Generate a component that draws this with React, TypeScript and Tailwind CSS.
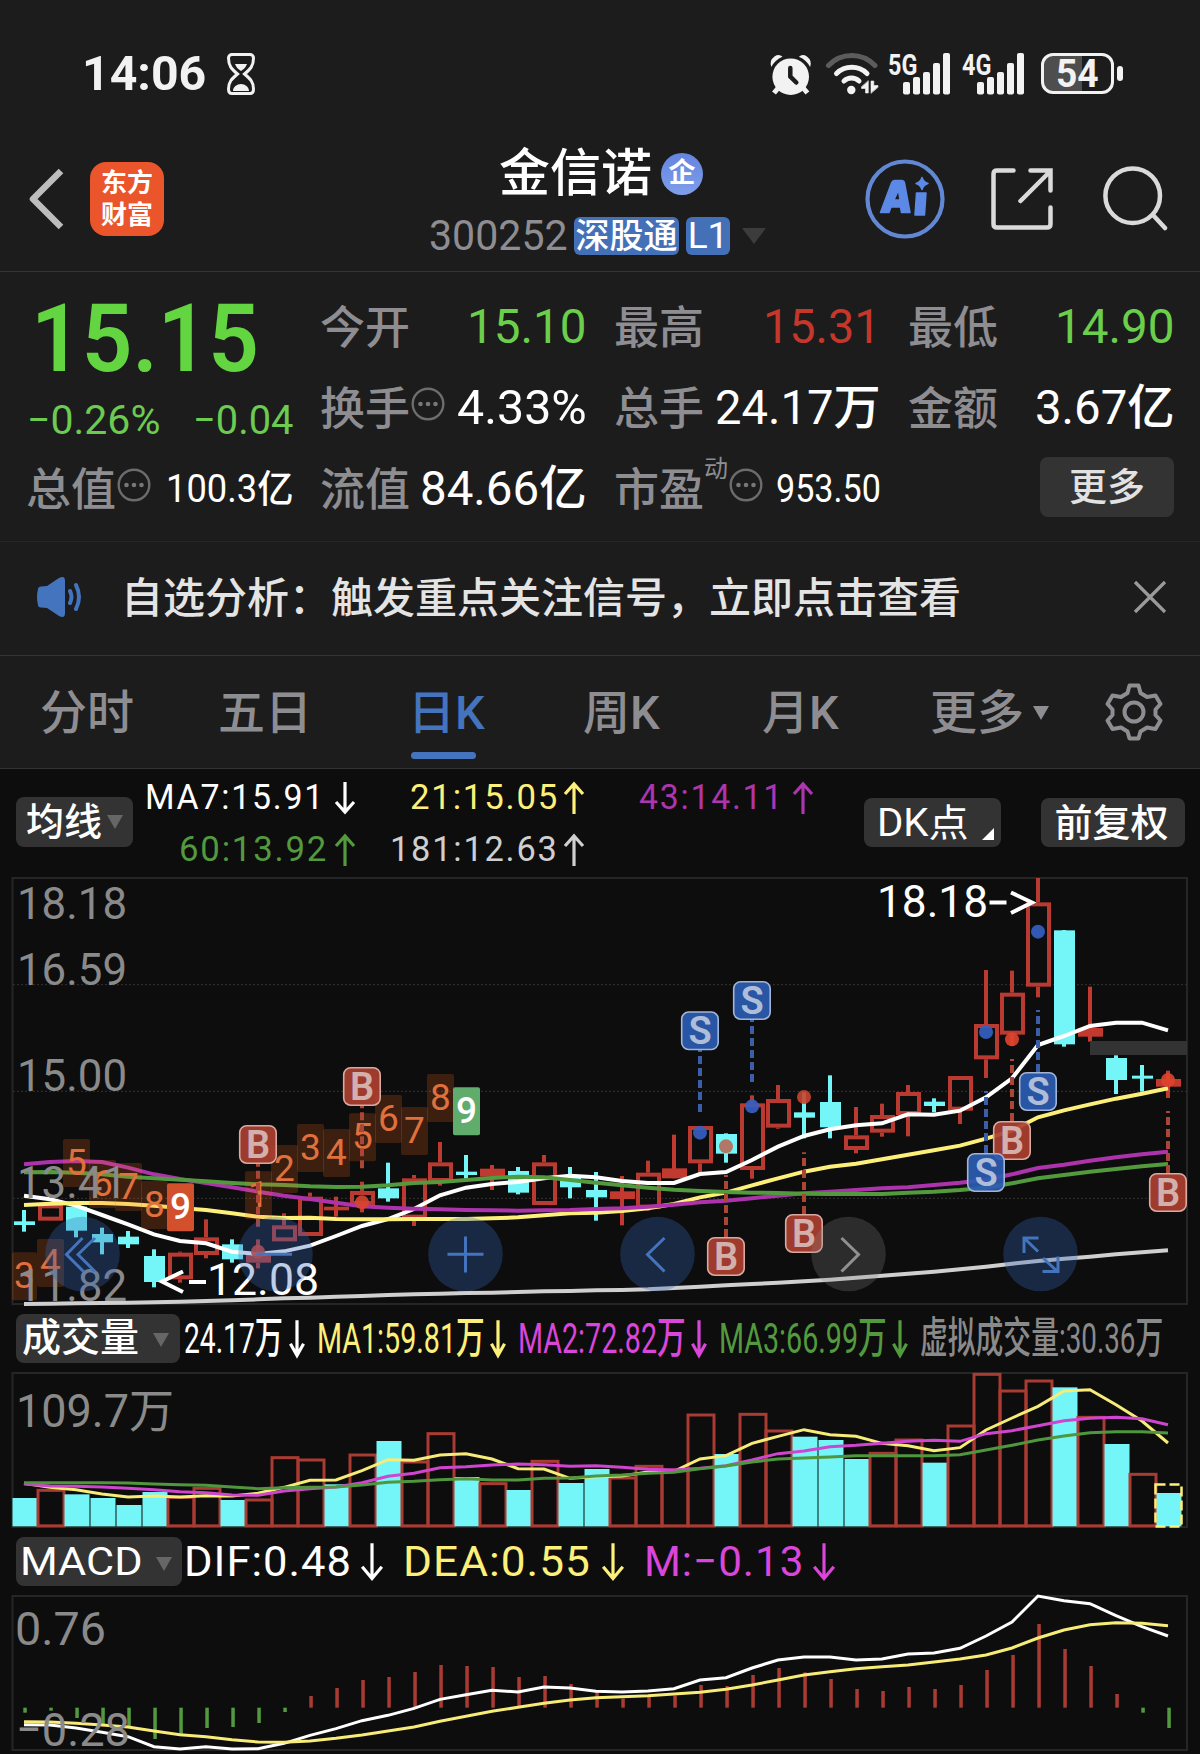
import { useLayoutEffect, useRef, useState } from "react";
import type { ReactNode } from "react";

const STEP = 26;
const FIRST_X = 24;
const FONT = "Roboto, 'Noto Sans CJK SC', sans-serif";
const cx = (i: number) => FIRST_X + i * STEP;

const RED = "#b93a30";
const CYAN = "#74f5f7";
const GREEN = "#539a3e";

// [kind, high, bodyTop, bodyBottom, low], offsets from the top of the pane in thirds of a pixel
// c = falling, r = rising (hollow), f = rising with a flat body
type Candle = ["c" | "r" | "f", number, number, number, number];
const candles: Candle[] = [
  ["c", 1050, 1084, 1095, 1115],
  ["r", 1033, 1033, 1082, 1082],
  ["c", 1036, 1040, 1112, 1132],
  ["c", 1103, 1122, 1147, 1183],
  ["c", 1113, 1130, 1153, 1164],
  ["c", 1168, 1188, 1266, 1282],
  ["r", 1175, 1178, 1258, 1268],
  ["r", 1078, 1132, 1185, 1195],
  ["c", 1138, 1153, 1198, 1208],
  ["r", 1138, 1185, 1208, 1225],
  ["r", 1060, 1096, 1144, 1144],
  ["r", 998, 1010, 1128, 1128],
  ["f", 1010, 1040, 1051, 1070],
  ["r", 965, 993, 1035, 1057],
  ["c", 908, 985, 1015, 1025],
  ["r", 945, 955, 1076, 1098],
  ["r", 846, 907, 966, 977],
  ["c", 885, 935, 945, 955],
  ["f", 915, 926, 950, 990],
  ["c", 921, 933, 998, 1003],
  ["r", 885, 907, 1035, 1035],
  ["c", 921, 950, 982, 1015],
  ["c", 936, 990, 1012, 1082],
  ["f", 948, 994, 1017, 1096],
  ["r", 902, 938, 1046, 1052],
  ["f", 824, 925, 955, 955],
  ["r", 798, 798, 910, 940],
  ["c", 820, 822, 881, 908],
  ["r", 706, 730, 930, 956],
  ["r", 675, 717, 803, 806],
  ["c", 697, 757, 773, 835],
  ["c", 646, 726, 802, 835],
  ["r", 741, 826, 870, 880],
  ["r", 731, 765, 818, 830],
  ["r", 675, 696, 765, 829],
  ["c", 715, 725, 738, 757],
  ["r", 648, 648, 752, 792],
  ["r", 330, 492, 598, 654],
  ["r", 332, 398, 524, 558],
  ["r", 54, 127, 380, 412],
  ["c", 210, 211, 553, 560],
  ["f", 380, 504, 530, 545],
  ["c", 586, 594, 660, 702],
  ["c", 615, 647, 656, 695],
  ["f", 632, 657, 680, 714],
];

const ma7 = [1007, 1018, 1037, 1065, 1093, 1123, 1143, 1150, 1175, 1182, 1174, 1157, 1128, 1098, 1077, 1047, 1006, 983, 972, 966, 955, 947, 952, 963, 969, 969, 942, 936, 900, 860, 828, 808, 796, 790, 763, 764, 752, 712, 655, 555, 528, 498, 488, 488, 511];
const ma21 = [1035, 1031, 1029, 1029, 1032, 1037, 1044, 1050, 1060, 1070, 1074, 1073, 1077, 1078, 1078, 1077, 1077, 1077, 1075, 1072, 1066, 1060, 1058, 1053, 1045, 1032, 1012, 998, 976, 955, 935, 920, 911, 898, 884, 871, 857, 836, 812, 772, 751, 733, 716, 701, 685];
const ma43 = [913, 906, 903, 906, 923, 943, 957, 969, 982, 995, 1007, 1017, 1028, 1039, 1043, 1046, 1048, 1050, 1051, 1052, 1051, 1050, 1047, 1045, 1040, 1034, 1027, 1022, 1015, 1007, 1000, 995, 990, 985, 982, 975, 968, 959, 943, 924, 914, 902, 892, 883, 875];
const ma60 = [937, 936, 938, 943, 950, 955, 959, 964, 969, 973, 975, 979, 981, 980, 976, 969, 966, 960, 954, 950, 952, 960, 968, 976, 983, 989, 993, 996, 998, 999, 1001, 1002, 1002, 1002, 998, 995, 990, 983, 970, 955, 945, 935, 927, 919, 912];
const ma181 = [1332, 1331, 1330, 1329, 1328, 1327, 1325, 1323, 1321, 1318, 1315, 1313, 1310, 1308, 1305, 1303, 1301, 1299, 1298, 1296, 1294, 1293, 1291, 1290, 1288, 1284, 1280, 1276, 1272, 1268, 1264, 1259, 1253, 1247, 1241, 1235, 1228, 1220, 1211, 1203, 1196, 1190, 1183, 1177, 1171];

const volumes: [string, number][] = [
  ["c", 594], ["r", 568], ["c", 583], ["c", 594], ["c", 615], ["c", 576], ["r", 589], ["r", 562], ["c", 600],
  ["r", 597], ["r", 470], ["r", 477], ["c", 553], ["r", 462], ["c", 423], ["r", 483], ["r", 398], ["c", 531],
  ["r", 548], ["c", 570], ["r", 481], ["c", 549], ["c", 507], ["r", 531], ["r", 496], ["r", 507], ["r", 342],
  ["c", 462], ["r", 340], ["r", 390], ["c", 410], ["c", 420], ["c", 477], ["r", 457], ["r", 417], ["c", 488],
  ["r", 375], ["r", 220], ["r", 270], ["r", 240], ["c", 262], ["r", 349], ["c", 432], ["r", 520], ["c", 579],
];
const vol1 = [550, 562, 569, 582, 591, 588, 591, 587, 588, 580, 562, 541, 540, 512, 479, 481, 465, 461, 477, 506, 507, 535, 530, 528, 516, 514, 477, 467, 430, 409, 389, 404, 409, 430, 437, 452, 443, 390, 354, 319, 273, 269, 314, 363, 429];
const vol2 = [552, 558, 559, 561, 565, 569, 575, 578, 585, 586, 573, 566, 561, 548, 529, 520, 503, 500, 495, 492, 494, 499, 497, 502, 508, 510, 505, 497, 480, 461, 453, 440, 436, 430, 424, 421, 424, 401, 392, 377, 362, 355, 352, 356, 374];
const vol3 = [548, 548, 548, 548, 549, 552, 554, 556, 561, 566, 563, 562, 561, 555, 547, 544, 539, 536, 540, 540, 535, 534, 528, 525, 520, 517, 506, 498, 486, 477, 474, 471, 467, 467, 467, 467, 464, 450, 436, 420, 408, 398, 395, 395, 399];

const macdBars = [1238, 1232, 1254, 1272, 1280, 1317, 1305, 1284, 1281, 1269, 1236, 1188, 1164, 1140, 1131, 1116, 1095, 1098, 1101, 1131, 1128, 1152, 1172, 1196, 1190, 1187, 1155, 1158, 1125, 1104, 1117, 1137, 1167, 1173, 1161, 1167, 1155, 1110, 1065, 972, 1047, 1098, 1182, 1238, 1284];
const dif = [1274, 1275, 1284, 1297, 1310, 1340, 1347, 1340, 1347, 1346, 1330, 1306, 1286, 1262, 1246, 1225, 1198, 1184, 1171, 1176, 1161, 1164, 1174, 1176, 1173, 1166, 1140, 1133, 1104, 1080, 1071, 1071, 1080, 1077, 1062, 1059, 1045, 1008, 966, 888, 902, 911, 947, 980, 1008];
const dea = [1265, 1266, 1270, 1275, 1281, 1293, 1304, 1310, 1319, 1326, 1327, 1323, 1315, 1305, 1293, 1281, 1264, 1249, 1234, 1222, 1210, 1200, 1193, 1190, 1187, 1182, 1177, 1168, 1155, 1140, 1125, 1115, 1106, 1100, 1095, 1086, 1077, 1065, 1044, 1014, 990, 974, 968, 970, 977];

// sequence counters: [candle index, digit, top]
const counters: [number, string, number][] = [
  [0, "3", 1177], [1, "4", 1137], [2, "5", 837], [3, "6", 900], [4, "7", 909], [5, "8", 963], [6, "9", 970],
  [9, "1", 934], [10, "2", 855], [11, "3", 792], [12, "4", 807], [13, "5", 760], [14, "6", 705], [15, "7", 741],
  [16, "8", 642], [17, "9", 682],
];

// buy / sell marks: [candle index, side, badge top, dash from, dash to, dot centre, dot colour]
const marks: [number, "B" | "S", number, number, number, number, string][] = [
  [9, "B", 795, 911, 1100, 1175, "#d8452f"],
  [13, "B", 621, 738, 925, 1027, "#d8452f"],
  [26, "S", 454, 570, 756, 818, "#3560c4"],
  [28, "S", 363, 479, 666, 739, "#3560c4"],
  [27, "B", 1131, 945, 1131, 859, "#b86a58"],
  [30, "B", 1062, 877, 1062, 711, "#c8452f"],
  [39, "S", 636, 450, 636, 215, "#3560c4"],
  [38, "B", 783, 597, 783, 538, "#e0442e"],
  [37, "S", 879, 693, 879, 516, "#3560c4"],
  [44, "B", 939, 753, 939, 660, "#e0442e"],
];

function points(values: number[], base: number) {
  return values.map((v, i) => `${cx(i)},${base + v / 3}`).join(" ");
}

function Line({ values, base, color, width = 4 }: { values: number[]; base: number; color: string; width?: number }) {
  return <polyline points={points(values, base)} fill="none" stroke={color} strokeWidth={width} />;
}

/** Squeezes or stretches one line of text to a given width. */
function Fit({ w, className = "", children }: { w: number; className?: string; children: ReactNode }) {
  const ref = useRef<HTMLSpanElement>(null);
  const [scale, setScale] = useState(1);
  useLayoutEffect(() => {
    if (ref.current) setScale(w / ref.current.offsetWidth);
  }, [w]);
  return (
    <span className={`block shrink-0 whitespace-nowrap text-left ${className}`} style={{ width: w }}>
      <span ref={ref} className="inline-block origin-left" style={{ transform: `scaleX(${scale})` }}>
        {children}
      </span>
    </span>
  );
}

function Arrow({ up = false, w = 22, h = 34 }: { up?: boolean; w?: number; h?: number }) {
  return (
    <svg width={w} height={h} viewBox="0 0 22 34" preserveAspectRatio="none" className="shrink-0" fill="none" stroke="currentColor" strokeWidth="3.200">
      {up ? (
        <path vectorEffect="non-scaling-stroke" d="M11 33V3M2 13l9-10 9 10" />
      ) : (
        <path vectorEffect="non-scaling-stroke" d="M11 1v30M2 21l9 10 9-10" />
      )}
    </svg>
  );
}

function Caret({ className = "" }: { className?: string }) {
  return (
    <svg width="16" height="14" viewBox="0 0 16 14" className={`shrink-0 ${className}`} fill="currentColor">
      <path d="M0 0h16L8 14z" />
    </svg>
  );
}

function Dots({ className = "" }: { className?: string }) {
  return (
    <svg width="34" height="34" viewBox="0 0 34 34" className={`shrink-0 ${className}`} fill="none" stroke="#6c6c6e" strokeWidth="2.4">
      <circle cx="17" cy="17" r="15.3" />
      <g fill="#77777a" stroke="none">
        <circle cx="9.5" cy="17" r="2.3" />
        <circle cx="17" cy="17" r="2.3" />
        <circle cx="24.5" cy="17" r="2.3" />
      </g>
    </svg>
  );
}

function Signal({ label }: { label: string }) {
  return (
    <div className="flex h-[42px] w-[62px]">
      <Fit w={29} className="text-[29px] font-bold leading-[24px]">{label}</Fit>
      <svg width="47" height="42" viewBox="0 0 47 42" className="-ml-[14px] shrink-0" fill="#f2f2f2">
        <rect x="0" y="29" width="7" height="12.5" rx="2" />
        <rect x="10" y="24" width="7" height="17.5" rx="2" />
        <rect x="20" y="19" width="7" height="22.5" rx="2" />
        <rect x="30" y="10" width="7" height="31.5" rx="2" />
        <rect x="40" y="0" width="7" height="41.5" rx="2" />
      </svg>
    </div>
  );
}

function StatusBar() {
  return (
    <div className="flex h-[130px] items-start pl-[82px] pt-[52px] text-[#f2f2f2]">
      <Fit w={124} className="text-[49px] font-bold leading-[44px]">14:06</Fit>
      <svg width="28" height="44" viewBox="0 0 28 44" className="ml-[21px]" fill="none" stroke="currentColor" strokeWidth="3">
        <path d="M5 2.5h18c2 0 3.500 1.500 3.500 3.500 0 8-3 11-9 16 6 5 9 8 9 15 0 3-1.500 4.500-3.500 4.500H5c-2 0-3.500-1.500-3.500-4.500 0-7 3-10 9-15-6-5-9-8-9-16 0-2 1.500-3.500 3.500-3.500z" />
        <path d="M8 12h12c-1 3-3 5-6 7-3-2-5-4-6-7zM6 39c0-4 4-7 8-7s8 3 8 7z" fill="currentColor" stroke="none" />
      </svg>
      <svg width="44" height="44" viewBox="0 0 44 44" className="ml-[514px]" fill="#f2f2f2">
        <path d="M2.300 15Q0 8.500 5.500 4.500 10 1.500 13.500 4.800 6 8 2.300 15zM41.100 15Q43.400 8.500 37.900 4.500 33.400 1.500 29.900 4.800 37.400 8 41.100 15z" />
        <path d="M10 35l-5 6M33.400 35l5 6" fill="none" stroke="#f2f2f2" strokeWidth="5" />
        <circle cx="21.700" cy="24.700" r="18.300" />
        <path d="M21.300 16v8.500l6 6" fill="none" stroke="#1c1c1c" strokeWidth="4.500" strokeLinecap="round" />
      </svg>
      <svg width="54" height="44" viewBox="0 0 54 44" className="ml-[12px]" fill="none" stroke="#f2f2f2" strokeWidth="5" strokeLinecap="round">
        <path d="M3.500 13.500a32 32 0 0 1 46.500 0" stroke="#5c5c5c" />
        <path d="M11.500 21.500a21.900 21.900 0 0 1 30.500 0" />
        <path d="M19 29a11 11 0 0 1 15 0" />
        <circle cx="26.300" cy="38" r="4.200" fill="#f2f2f2" stroke="none" />
        <path d="M43.300 29v12h-2.800v-4.500h-4v-1.500zM46 41V29h2.800v4.500h4.200v1.500z" fill="#f2f2f2" stroke="#f2f2f2" strokeWidth="0.600" />
      </svg>
      <div className="ml-[9px] mt-px"><Signal label="5G" /></div>
      <div className="ml-[12px] mt-px"><Signal label="4G" /></div>
      <div className="ml-[17px] mt-px flex items-center">
        <div className="relative flex h-[41px] w-[73px] items-center justify-center rounded-[12px] border-[3.500px] border-[#f2f2f2] bg-linear-to-r from-[#4e4e4e] from-57% to-[#1c1c1c] to-57%">
          <Fit w={43} className="text-[38px] font-bold leading-[38px]">54</Fit>
        </div>
        <div className="ml-[3px] h-[15px] w-[6px] rounded-[3px] bg-[#f2f2f2]" />
      </div>
    </div>
  );
}

function Header() {
  return (
    <header className="flex h-[142px] items-start border-b border-[#333] text-white">
      <svg width="40" height="64" viewBox="0 0 40 64" className="ml-[27px] mt-[37px]" fill="none" stroke="#bdbdbd" strokeWidth="6.500" strokeLinejoin="round">
        <path d="M34 4L6 32l28 28" />
      </svg>
      <div className="ml-[23px] mt-8 flex h-[74px] w-[74px] flex-col items-center justify-center rounded-2xl bg-[#ea552b] text-[26px] font-bold leading-8">
        <span>东方</span>
        <span>财富</span>
      </div>
      <div className="ml-[264px] mt-[13px] flex w-[342px] flex-col">
        <div className="ml-[71px] flex items-center">
          <span className="text-[51px] font-medium leading-[62px]">金信诺</span>
          <span className="ml-[9px] flex size-[42px] items-center justify-center rounded-full bg-linear-to-b from-[#6484e0] to-[#7f9fea] pb-px text-[27px] font-bold leading-[27px]">
            企
          </span>
        </div>
        <div className="mt-[11px] flex items-center">
          <Fit w={139} className="ml-px text-[42px] leading-[40px] text-[#8e8d92]">300252</Fit>
          <span className="ml-[6px] flex h-[38px] w-[105px] items-center justify-center rounded-md bg-[#4470b8] text-[34px] font-medium leading-[34px]">
            深股通
          </span>
          <span className="ml-[7px] flex h-[38px] w-[44px] items-center justify-center rounded-md bg-[#4470b8] text-[37px] leading-[38px]">
            L1
          </span>
          <svg width="24" height="16" viewBox="0 0 24 16" className="ml-[12px]" fill="#3c3c3c">
            <path d="M0 0h24L12 16z" />
          </svg>
        </div>
      </div>
      <svg width="80" height="80" viewBox="0 0 80 80" className="ml-[95px] mt-[29px]">
        <circle cx="40" cy="40" r="37.500" fill="none" stroke="#6288d4" strokeWidth="4.200" />
        <path d="M15.500 53.500l11-29.500q1-2.500 3.500-2.500h6.500q2.500 0 3 2.500l5.500 29.500h-8.500l-1-5.500h-9.500l-2 5.500zM29 41h6l-1.500-10zM51.500 34h9.500L59.500 56h-9.500zM57 18.500q1.500 4.500 6 6-4.500 1.500-6 6-1.500-4.500-6-6 4.500-1.500 6-6z" fill="#5c89e6" stroke="#5c89e6" strokeWidth="1.500" strokeLinejoin="round" />
      </svg>
      <svg width="62" height="64" viewBox="0 0 62 64" className="ml-[46px] mt-[37px]" fill="none" stroke="#dadada" strokeWidth="4.500" strokeLinecap="round">
        <path d="M22.500 3.500H6Q2.500 3.500 2.500 7V57q0 3.500 3.500 3.500H56q3.500 0 3.500-3.500V40.500" />
        <path d="M39.500 3.500h20v20M59 4.500L29.500 34" />
      </svg>
      <svg width="66" height="66" viewBox="0 0 66 66" className="ml-[49px] mt-[36px]" fill="none" stroke="#dadada" strokeWidth="4.500" strokeLinecap="round">
        <circle cx="30.700" cy="29.700" r="27.300" />
        <path d="M51 49l12 13" />
      </svg>
    </header>
  );
}

function Item({ label, value, w, tone, small, dots, sup }: { label: string; value: string; w: number; tone: string; small?: boolean; dots?: boolean; sup?: string }) {
  return (
    <div className="flex h-[81px] items-center">
      <span className="-ml-px mt-[7px] text-[45px] font-[450] leading-[50px] text-[#8e8d92]">{label}</span>
      {sup && <span className="-mt-[38px] text-2xl leading-6 text-[#8e8d92]">{sup}</span>}
      {dots && <Dots className="mb-[6px] ml-px" />}
      <Fit w={w} className={`ml-auto mt-[3px] ${small ? "text-[38px]" : "text-[48px]"} leading-[50px] ${tone}`}>{value}</Fit>
    </div>
  );
}

function Quote() {
  return (
    <section className="flex h-[270px] gap-7 border-b border-[#262626] pl-[27px] pt-[13px]">
      <div className="flex w-[266px] flex-col">
        <div className="flex h-[162px] flex-col text-[#63d541]">
          <Fit w={228} className="ml-[4px] mt-[6px] text-[95px] font-semibold leading-[96px]">15.15</Fit>
          <div className="mt-[8px] flex justify-between text-[41px] font-[450] leading-[50px] text-[#6ccb50]">
            <Fit w={133}>−0.26%</Fit>
            <Fit w={100}>−0.04</Fit>
          </div>
        </div>
        <Item label="总值" value="100.3亿" w={127} tone="text-white font-[450]" small dots />
      </div>
      <div className="w-[266px]">
        <Item label="今开" value="15.10" w={120} tone="text-[#6bcf4c] font-[450]" />
        <Item label="换手" value="4.33%" w={130} tone="text-white font-[450]" dots />
        <Item label="流值" value="84.66亿" w={167} tone="text-white font-[450]" />
      </div>
      <div className="w-[266px]">
        <Item label="最高" value="15.31" w={118} tone="text-[#c5372b] font-[450]" />
        <Item label="总手" value="24.17万" w={166} tone="text-white font-[450]" />
        <Item label="市盈" value="953.50" w={105} tone="text-white font-[450]" small dots sup="动" />
      </div>
      <div className="w-[266px]">
        <Item label="最低" value="14.90" w={120} tone="text-[#6bcf4c] font-[450]" />
        <Item label="金额" value="3.67亿" w={140} tone="text-white font-[450]" />
        <button type="button" className="ml-auto mr-px mt-[10px] flex h-[60px] w-[134px] items-center justify-center rounded-lg bg-[#333] text-[38px] font-medium leading-[50px] text-[#e2e2e2]">
          更多
        </button>
      </div>
    </section>
  );
}

function Notice() {
  return (
    <section className="flex h-[114px] items-center border-b border-[#333] pl-[36px]">
      <svg width="48" height="40" viewBox="0 0 48 40" className="-mt-[3px]" fill="none" stroke="#4474bd" strokeWidth="4" strokeLinecap="round">
        <path d="M2 12q0-2 3-2.500L11 9 23 1q6-3 6 3v32q0 6-6 3L11 31l-6-.5q-3-.5-3-2.500-2-8 0-16z" fill="#4474bd" stroke="none" />
        <path d="M34 14q3 6 0 12M40 8q6 12 0 24" />
      </svg>
      <span className="ml-[37px] text-[42px] font-medium leading-[50px] text-[#e4e4e4]">自选分析：触发重点关注信号，立即点击查看</span>
      <svg width="34" height="34" viewBox="0 0 34 34" className="-mt-[3px] ml-[172px]" fill="none" stroke="#9a9a9a" strokeWidth="3.200">
        <path d="M2 2l30 30M32 2L2 32" />
      </svg>
    </section>
  );
}

const tabs = [
  { label: "分时", lead: "ml-[40px] w-[95px]" },
  { label: "五日", lead: "ml-[83px] w-[95px]" },
  { label: "日K", lead: "ml-[95px] w-[78px]", active: true },
  { label: "周K", lead: "ml-[97px] w-[78px]" },
  { label: "月K", lead: "ml-[101px] w-[78px]" },
];

function Tabs() {
  return (
    <nav className="flex h-[113px] items-start border-b border-[#333] text-[47px] leading-[56px] text-[#8e8d92]">
      {tabs.map((t) => (
        <div key={t.label} className={`flex h-full shrink-0 flex-col whitespace-nowrap pt-[29px] ${t.lead} ${t.active ? "text-[#4474bd]" : ""}`}>
          <span className="font-medium">{t.label}</span>
          {t.active && <span className="ml-[3px] mt-[11px] h-[7px] w-[65px] rounded-full bg-[#4474bd]" />}
        </div>
      ))}
      <div className="ml-[90px] flex shrink-0 items-center pt-[29px] font-medium">
        更多
        <Caret className="ml-[9px]" />
      </div>
      <svg width="58" height="58" viewBox="0 0 58 58" className="ml-[56px] mt-[27px]" fill="none" stroke="#8e8d92" strokeWidth="4" strokeLinejoin="round">
        <path d="M24.500 2.500h9l2 7.500 6.500 4 8.500-1.500 5 8.500-5 5.500v5.500l5 5.500-5 8.500-8.500-1.500-6.500 4-2 7h-9l-2-7-6.500-4L7.500 46l-5-8.500 5-5.500v-5.500l-5-5.500 5-8.500L16 14l6.500-4z" />
        <circle cx="29" cy="29" r="9.500" />
      </svg>
    </nav>
  );
}

function MaBar() {
  return (
    <div className="flex h-[103px] pl-[16px]">
      <button type="button" className="mt-[28px] flex h-[50px] w-[117px] items-center rounded-lg bg-[#333] pl-[10px] text-[38px] font-medium leading-[46px] text-white">
        均线
        <Caret className="ml-[5px] text-[#666]" />
      </button>
      <div className="ml-[12px] flex w-[670px] flex-col pt-[3px] text-[35px] leading-[52px] tracking-[1.800px]">
        <div className="flex h-[52px] items-center">
          <Fit w={180} className="text-white">MA7:15.91</Fit>
          <span className="ml-[9px] text-white"><Arrow /></span>
          <Fit w={149} className="ml-[54px] text-[#fdf07a]">21:15.05</Fit>
          <span className="ml-[4px] text-[#fdf07a]"><Arrow up /></span>
          <Fit w={145} className="ml-[54px] text-[#ad35ad]">43:14.11</Fit>
          <span className="ml-[8px] text-[#ad35ad]"><Arrow up /></span>
        </div>
        <div className="flex h-[52px] items-center pl-[34px]">
          <Fit w={149} className="text-[#539a3e]">60:13.92</Fit>
          <span className="ml-[6px] text-[#539a3e]"><Arrow up /></span>
          <Fit w={169} className="ml-[34px] text-[#cfcfcf]">181:12.63</Fit>
          <span className="ml-[4px] text-[#cfcfcf]"><Arrow up /></span>
        </div>
      </div>
      <button type="button" className="ml-[49px] mt-[29px] flex h-[49px] w-[137px] items-center rounded-lg bg-[#333] pl-[13px] text-[38px] leading-[46px] text-white">
        <Fit w={92}>DK点</Fit>
        <svg width="12" height="12" viewBox="0 0 12 12" className="ml-[13px] mt-[22px]" fill="#fff">
          <path d="M12 0v12H0z" />
        </svg>
      </button>
      <button type="button" className="ml-[40px] mt-[29px] flex h-[49px] w-[144px] items-center justify-center rounded-lg bg-[#333] pr-[3px] text-[38px] font-medium leading-[46px] text-white">
        前复权
      </button>
    </div>
  );
}

const axis: [string, number][] = [
  ["18.18", 919],
  ["16.59", 984.5],
  ["15.00", 1090.5],
  ["13.41", 1197.5],
  ["11.82", 1300.5],
];

function PriceChart() {
  const y = (v: number) => 860 + v / 3;
  return (
    <svg width="1200" height="440" viewBox="0 872 1200 440" className="block" fontFamily={FONT}>
      <rect x="12.500" y="878" width="1174.500" height="426" fill="none" stroke="#262626" strokeWidth="2" />
      {[984.7, 1091.3, 1198.3].map((gy) => (
        <path key={gy} d={`M13 ${gy}H1187`} stroke="#2c2c2c" strokeWidth="1.200" strokeDasharray="2 2" />
      ))}
      {candles.map(([kind, high, top, bottom, low], i) => {
        const x = cx(i);
        if (kind === "c") {
          return (
            <g key={i} fill={CYAN}>
              <rect x={x - 2} y={y(high)} width="4" height={(low - high) / 3} />
              <rect x={x - 10} y={y(top)} width="21" height={(bottom - top) / 3} />
            </g>
          );
        }
        if (kind === "f") {
          return (
            <g key={i} fill="#c23a2f">
              <rect x={x - 2} y={y(high)} width="4" height={(low - high) / 3} />
              <rect x={x - 12} y={y(top)} width="25" height={(bottom - top) / 3} />
            </g>
          );
        }
        return (
          <g key={i} fill={RED}>
            <rect x={x - 2} y={y(high)} width="4" height={(top - high) / 3} />
            <rect x={x - 2} y={y(bottom)} width="4" height={(low - bottom) / 3} />
            <rect x={x - 10} y={y(top) + 2} width="21" height={(bottom - top) / 3 - 4} fill="none" stroke={RED} strokeWidth="4" />
          </g>
        );
      })}
      <Line values={ma181} base={860} color="#cfcfcf" />
      <Line values={ma7} base={860} color="#ffffff" />
      <Line values={ma21} base={860} color="#fdf07a" />
      <Line values={ma43} base={860} color="#ad33ad" />
      <Line values={ma60} base={860} color={GREEN} />
      <rect x="1090" y="1041" width="97" height="14" fill="#333" />

      {counters.map(([i, digit, top]) => {
        const last = digit === "9";
        const fill = i === 6 ? "#d2502b" : i === 17 ? "#5fac6d" : "#ff6a20";
        return (
          <g key={i}>
            <rect x={i === 0 ? 12 : cx(i) - 13} y={y(top)} width={i === 0 ? 25 : 27} height="48" rx="2" fill={fill} opacity={last ? 1 : 0.2} />
            <text x={cx(i) + 0.500} y={y(top) + 36} textAnchor="middle" fontSize="37" fontWeight={last ? 500 : 450} fill={last ? "#fff" : "#e0703c"}>
              {digit}
            </text>
          </g>
        );
      })}

      {marks.map(([i, side, top, from, to, dot, dotColor]) => {
        const buy = side === "B";
        return (
          <g key={`${side}${i}`}>
            <circle cx={cx(i)} cy={y(dot)} r="7" fill={dotColor} opacity="0.900" />
            <path d={`M${cx(i)} ${y(to)}V${y(from)}`} stroke={buy ? "#ab4536" : "#3a5fa8"} strokeWidth="4" strokeDasharray="8 4" />
            <rect x={cx(i) - 18.300} y={y(top) + 0.700} width="36.500" height="37.500" rx="7" fill={buy ? "#ab4030" : "#2c5bb2"} fillOpacity="0.930" stroke={buy ? "#d9aaa2" : "#a3b5d6"} strokeWidth="1.600" />
            <text x={cx(i)} y={y(top) + 32.500} textAnchor="middle" fontSize="38" fontWeight="600" fill={buy ? "#d3b0ab" : "#b0bdd8"}>
              {side}
            </text>
          </g>
        );
      })}

      <g fontSize="45" fontWeight="450" fill="#8a8a8a">
        {axis.map(([label, ty]) => (
          <text key={label} x="17" y={ty} textLength="110" lengthAdjust="spacingAndGlyphs">
            {label}
          </text>
        ))}
      </g>
      <g fontSize="45" fontWeight="450" fill="#fff">
        <text x="877" y="917" textLength="111" lengthAdjust="spacingAndGlyphs">18.18</text>
        <text x="207" y="1295" textLength="112" lengthAdjust="spacingAndGlyphs">12.08</text>
      </g>
      <g fill="none" stroke="#fff" strokeWidth="4">
        <path d="M989.500 902.500h17M1011 892.500l21 10-21 10.500" />
        <path d="M206 1282h-17M183 1271.500l-21 10 21 10.500" />
      </g>

      <g stroke="#4474bd" strokeWidth="3" fill="none">
        {[82, 275, 465, 657, 1040].map((bx) => (
          <circle key={bx} cx={bx + 0.500} cy="1254" r="37.300" fill="#3568b8" fillOpacity="0.320" stroke="none" />
        ))}
        <circle cx="848.500" cy="1254" r="37.300" fill="#888" fillOpacity="0.260" stroke="none" />
        <path d="M82.500 1238l-16 16.500 17 17M95 1238l-17 16.500 17 17" />
        <path d="M256.500 1254.300h35.500" />
        <path d="M447.500 1254.300h36M465.500 1236.500v36" />
        <path d="M664.500 1238l-17 16.500 17 17" />
        <path d="M841.500 1238l17 16.500-17 17" stroke="#909090" />
        <path d="M1038.500 1238h-14.500v15M1024 1238l14 13.500M1043 1258l15 14M1042.500 1271.500h15.500v-15" />
      </g>
    </svg>
  );
}

function VolumeChart() {
  const y = (v: number) => 1300 + v / 3;
  return (
    <svg width="1200" height="160" viewBox="0 1370 1200 160" className="block" fontFamily={FONT}>
      <rect x="12.500" y="1373" width="1174.500" height="154" fill="none" stroke="#262626" strokeWidth="2" />
      <text x="16" y="1427" fontSize="46" fill="#8a8a8a" textLength="158" lengthAdjust="spacingAndGlyphs">109.7万</text>
      {volumes.map(([kind, top], i) =>
        kind === "c" ? (
          <rect key={i} x={cx(i) - 11.500} y={y(top)} width="25" height={y(679) - y(top)} fill={CYAN} />
        ) : (
          <rect key={i} x={cx(i) - 12} y={y(top) + 1} width="26" height={y(679) - y(top) - 1.500} fill="none" stroke="#aa3b32" strokeWidth="3" />
        ),
      )}
      <rect x="1155.500" y="1484.500" width="26" height="42" fill="none" stroke="#fdf07a" strokeWidth="2.500" strokeDasharray="10 4" />
      <Line values={vol1} base={1300} color="#f8ec78" width={3} />
      <Line values={vol2} base={1300} color="#cf45cf" width={3} />
      <Line values={vol3} base={1300} color="#4f963f" width={3} />
    </svg>
  );
}

function MacdChart() {
  const y = (v: number) => 1300 + v / 3;
  return (
    <svg width="1200" height="161" viewBox="0 1593 1200 161" className="block" fontFamily={FONT}>
      <rect x="12.500" y="1596" width="1174.500" height="154" fill="none" stroke="#262626" strokeWidth="2" />
      {macdBars.map((v, i) => (
        <rect key={i} x={cx(i) - 0.700} y={Math.min(y(v), y(1223))} width="3.500" height={Math.abs(v - 1223) / 3} fill={v > 1223 ? GREEN : "#aa3b32"} />
      ))}
      <Line values={dif} base={1300} color="#ffffff" width={3} />
      <Line values={dea} base={1300} color="#f8ec78" width={3} />
      <g fontSize="47" fill="#8a8a8a">
        <text x="15" y="1644.500" textLength="91" lengthAdjust="spacingAndGlyphs">0.76</text>
        <text x="16" y="1745.500" textLength="114" lengthAdjust="spacingAndGlyphs">−0.28</text>
      </g>
    </svg>
  );
}

function VolumeBar() {
  return (
    <div className="flex h-[58px] items-start pl-[16px] pt-[2px] text-[43px] leading-[49px]">
      <button type="button" className="flex h-[49px] w-[164px] items-center rounded-lg bg-[#333] pl-[6px] pb-px text-[39px] font-medium leading-[46px] text-white">
        成交量
        <Caret className="ml-[14px] mt-1 text-[#666]" />
      </button>
      <div className="flex items-center font-[450]">
        <Fit w={99} className="ml-[4px] text-white">24.17万</Fit>
        <span className="ml-[6px] text-white"><Arrow w={16} h={40} /></span>
        <Fit w={168} className="ml-[12px] text-[#fdf07a]">MA1:59.81万</Fit>
        <span className="ml-[5px] text-[#fdf07a]"><Arrow w={16} h={40} /></span>
        <Fit w={168} className="ml-[12px] text-[#d946d9]">MA2:72.82万</Fit>
        <span className="ml-[5px] text-[#d946d9]"><Arrow w={16} h={40} /></span>
        <Fit w={168} className="ml-[12px] text-[#539a3e]">MA3:66.99万</Fit>
        <span className="ml-[5px] text-[#539a3e]"><Arrow w={16} h={40} /></span>
        <Fit w={243} className="ml-[12px] text-[#8a8a8a]">虚拟成交量:30.36万</Fit>
      </div>
    </div>
  );
}

function MacdBar() {
  return (
    <div className="flex h-[63px] items-start pl-[16px] pt-[7px] text-[43px] leading-[49px]">
      <button type="button" className="flex h-[49px] w-[166px] items-center rounded-lg bg-[#333] pl-[4px] text-[39px] font-[450] leading-[46px] text-white">
        <Fit w={123}>MACD</Fit>
        <Caret className="ml-[13px] mt-1 text-[#666]" />
      </button>
      <div className="flex items-center font-[450]">
        <Fit w={168} className="ml-[2px] tracking-[1px] text-white">DIF:0.48</Fit>
        <span className="ml-[8px] text-white"><Arrow w={24} h={40} /></span>
        <Fit w={188} className="ml-[19px] tracking-[1px] text-[#fdf07a]">DEA:0.55</Fit>
        <span className="ml-[10px] text-[#fdf07a]"><Arrow w={24} h={40} /></span>
        <Fit w={160} className="ml-[19px] tracking-[1px] text-[#d946d9]">M:−0.13</Fit>
        <span className="ml-[8px] text-[#d946d9]"><Arrow w={24} h={40} /></span>
      </div>
    </div>
  );
}

export default function App() {
  return (
    <main className="h-[1754px] w-[1200px] overflow-hidden bg-[#0d0d0d] font-[Roboto,'Noto_Sans_CJK_SC',sans-serif]">
      <div className="bg-[#1c1c1c]">
        <StatusBar />
        <Header />
        <Quote />
        <Notice />
        <Tabs />
      </div>
      <MaBar />
      <PriceChart />
      <VolumeBar />
      <VolumeChart />
      <MacdBar />
      <MacdChart />
    </main>
  );
}
